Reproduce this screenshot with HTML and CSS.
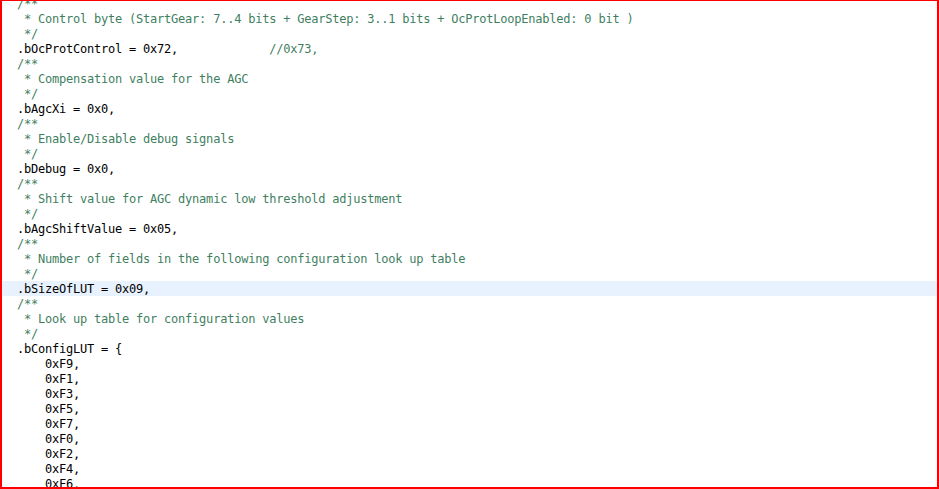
FILE: index.html
```html
<!DOCTYPE html>
<html lang="en">
<head>
  <meta charset="UTF-8">
  <title>Config source</title>
  <link rel="stylesheet" href="styles.css">
</head>
<body>
  <div class="frame">
    <div class="code">
      <div class="line"><span class="cm">/**</span></div>
      <div class="line"><span class="cm"> * Control byte (StartGear: 7..4 bits + GearStep: 3..1 bits + OcProtLoopEnabled: 0 bit )</span></div>
      <div class="line"><span class="cm"> */</span></div>
      <div class="line">.bOcProtControl = 0x72,             <span class="cm">//0x73,</span></div>
      <div class="line"><span class="cm">/**</span></div>
      <div class="line"><span class="cm"> * Compensation value for the AGC</span></div>
      <div class="line"><span class="cm"> */</span></div>
      <div class="line">.bAgcXi = 0x0,</div>
      <div class="line"><span class="cm">/**</span></div>
      <div class="line"><span class="cm"> * Enable/Disable debug signals</span></div>
      <div class="line"><span class="cm"> */</span></div>
      <div class="line">.bDebug = 0x0,</div>
      <div class="line"><span class="cm">/**</span></div>
      <div class="line"><span class="cm"> * Shift value for AGC dynamic low threshold adjustment</span></div>
      <div class="line"><span class="cm"> */</span></div>
      <div class="line">.bAgcShiftValue = 0x05,</div>
      <div class="line"><span class="cm">/**</span></div>
      <div class="line"><span class="cm"> * Number of fields in the following configuration look up table</span></div>
      <div class="line"><span class="cm"> */</span></div>
      <div class="line current">.bSizeOfLUT = 0x09,</div>
      <div class="line"><span class="cm">/**</span></div>
      <div class="line"><span class="cm"> * Look up table for configuration values</span></div>
      <div class="line"><span class="cm"> */</span></div>
      <div class="line">.bConfigLUT = {</div>
      <div class="line">    0xF9,</div>
      <div class="line">    0xF1,</div>
      <div class="line">    0xF3,</div>
      <div class="line">    0xF5,</div>
      <div class="line">    0xF7,</div>
      <div class="line">    0xF0,</div>
      <div class="line">    0xF2,</div>
      <div class="line">    0xF4,</div>
      <div class="line">    0xF6,</div>
      <div class="line">    0xF8,</div>
    </div>
  </div>
</body>
</html>
```

FILE: styles.css
```css
html, body {
  margin: 0;
  padding: 0;
  background: #fff;
  overflow: hidden;
}
.frame {
  width: 939px;
  height: 489px;
  box-sizing: border-box;
  border: 2px solid #ff0000;
  border-top-width: 1px;
  overflow: hidden;
  background: #fff;
}
.code {
  margin-top: -5px;
  font-family: 'DejaVu Sans Mono', monospace;
  font-size: 12px;
  letter-spacing: -0.22px;
  color: #000;
}
.line {
  height: 15px;
  line-height: 17px;
  padding-left: 15px;
  white-space: pre;
}
.line.current {
  background: #e8f2fe;
}
.cm {
  color: #3f7f5f;
}
```
